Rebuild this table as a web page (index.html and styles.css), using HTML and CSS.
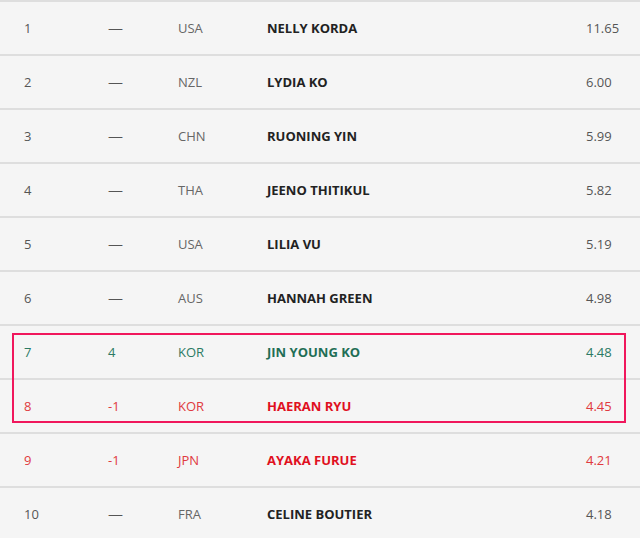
FILE: index.html
```html
<!DOCTYPE html>
<html>
<head>
<meta charset="utf-8">
<link rel="stylesheet" href="styles.css">
</head>
<body>
<div class="table">
  <div class="row"><span class="rank">1</span><span class="move">—</span><span class="nat">USA</span><span class="name">NELLY KORDA</span><span class="pts">11.65</span></div>
  <div class="row"><span class="rank">2</span><span class="move">—</span><span class="nat">NZL</span><span class="name">LYDIA KO</span><span class="pts">6.00</span></div>
  <div class="row"><span class="rank">3</span><span class="move">—</span><span class="nat">CHN</span><span class="name">RUONING YIN</span><span class="pts">5.99</span></div>
  <div class="row"><span class="rank">4</span><span class="move">—</span><span class="nat">THA</span><span class="name">JEENO THITIKUL</span><span class="pts">5.82</span></div>
  <div class="row"><span class="rank">5</span><span class="move">—</span><span class="nat">USA</span><span class="name">LILIA VU</span><span class="pts">5.19</span></div>
  <div class="row"><span class="rank">6</span><span class="move">—</span><span class="nat">AUS</span><span class="name">HANNAH GREEN</span><span class="pts">4.98</span></div>
  <div class="row up"><span class="rank">7</span><span class="move">4</span><span class="nat">KOR</span><span class="name">JIN YOUNG KO</span><span class="pts">4.48</span></div>
  <div class="row down"><span class="rank">8</span><span class="move">-1</span><span class="nat">KOR</span><span class="name">HAERAN RYU</span><span class="pts">4.45</span></div>
  <div class="row down"><span class="rank">9</span><span class="move">-1</span><span class="nat">JPN</span><span class="name">AYAKA FURUE</span><span class="pts">4.21</span></div>
  <div class="row"><span class="rank">10</span><span class="move">—</span><span class="nat">FRA</span><span class="name">CELINE BOUTIER</span><span class="pts">4.18</span></div>
  <div class="highlight"></div>
</div>
</body>
</html>
```
FILE: styles.css
```css
html, body {
  margin: 0;
  padding: 0;
  background: #f5f5f5;
}
body {
  font-family: "Open Sans", "Noto Sans", sans-serif;
  font-size: 13px;
  color: #555;
}
.table {
  position: relative;
  width: 640px;
}
.row {
  display: flex;
  align-items: center;
  height: 52px;
  border-top: 2px solid #dedede;
  background: #f5f5f5;
}
.rank { width: 108px; padding-left: 24px; box-sizing: border-box; color: #555; }
.move { width: 70px; color: #555; transform: scaleX(1.15); transform-origin: left center; }
.row.up .move, .row.down .move { transform: none; }
.nat { width: 89px; color: #666; }
.name { width: 319px; font-weight: 700; color: #222; }
.pts { color: #555; }
.row.up span { color: #2b7a64; }
.row.up .name { color: #1f6e55; }
.row.down span { color: #e03a40; }
.row.down .name { color: #e0101e; }
.highlight {
  position: absolute;
  left: 12px;
  top: 333px;
  width: 610px;
  height: 86px;
  border: 2px solid #f0175c;
}
```
